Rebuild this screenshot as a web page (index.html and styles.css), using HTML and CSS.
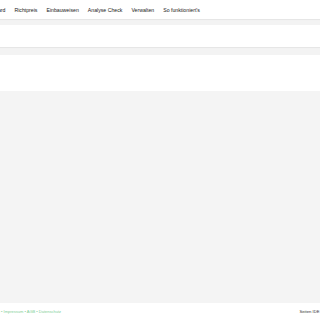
FILE: index.html
```html
<!DOCTYPE html>
<html lang="de">
<head>
    <meta charset="UTF-8">
    <meta name="viewport" content="width=device-width, initial-scale=1.0">
    <title>Dashboard</title>
    <link rel="stylesheet" href="styles.css">
</head>
<body>
    <div class="page">
        <nav class="topnav">
            <a href="#">Dashboard</a>
            <a href="#">Richtpreis</a>
            <a href="#">Einbauweisen</a>
            <a href="#">Analyse Check</a>
            <a href="#">Verwalten</a>
            <a href="#">So funktioniert's</a>
        </nav>

        <div class="divider"></div>
        <div class="toolbar"></div>
        <div class="divider divider-wide"></div>
        <div class="filters"></div>

        <main class="content">
            <!-- Inhalt -->
        </main>

        <footer class="footer">
            <div class="footer-links">
                <a href="#">Startseite</a> &bull;
                <a href="#">Impressum</a> &bull;
                <a href="#">AGB</a> &bull;
                <a href="#">Datenschutz</a>
            </div>
            <div class="footer-info">Seiten IDE ?</div>
        </footer>
    </div>
</body>
</html>
```

FILE: styles.css
```css
* {
    box-sizing: border-box;
    margin: 0;
    padding: 0;
    font-family: 'Liberation Sans', Arial, sans-serif;
}

html, body {
    height: 100%;
    overflow: hidden;
}

body {
    background: white;
    color: #222;
    display: flex;
    justify-content: center;
}

.page {
    flex: 0 0 360px;
    display: flex;
    flex-direction: column;
    height: 100%;
}

.topnav {
    height: 19px;
    display: flex;
    align-items: center;
    gap: 9px;
    background: white;
}

.topnav a {
    font-size: 5.2px;
    color: #1a1a1a;
    text-decoration: none;
}

.divider {
    height: 6px;
    background: #f3f3f3;
    box-shadow: inset 0 1px 1px rgba(0, 0, 0, 0.06);
    margin: 0 -200px;
}

.divider-wide {
    height: 8px;
}

.toolbar {
    height: 22px;
    background: white;
}

.filters {
    height: 36px;
    background: white;
}

.content {
    flex: 1;
    background: #f4f4f4;
    margin: 0 -200px;
}

.footer {
    height: 17px;
    display: flex;
    justify-content: space-between;
    align-items: center;
    padding: 0 0 1px 3px;
    background: white;
}

.footer-links {
    font-size: 4px;
    color: #7fcf98;
}

.footer-links a {
    color: #7fcf98;
    text-decoration: none;
}

.footer-info {
    font-size: 4.2px;
    color: #333;
    margin-right: 17px;
}
```
